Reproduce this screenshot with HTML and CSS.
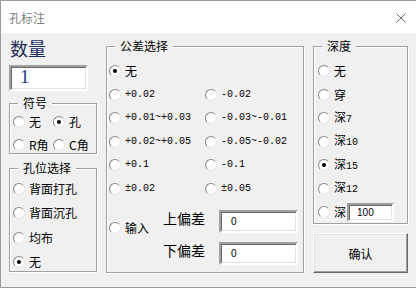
FILE: index.html
```html
<!DOCTYPE html>
<html lang="zh-CN">
<head>
<meta charset="utf-8">
<title>孔标注</title>
<link rel="stylesheet" href="styles.css">
</head>
<body>
<div class="window">
  <div class="titlebar">
    <span class="title">孔标注</span>
    <svg class="close" width="10" height="10" viewBox="0 0 10 10"><path d="M0.5 0.5L9.5 9.5M9.5 0.5L0.5 9.5" stroke="#707070" stroke-width="1" fill="none"/></svg>
  </div>
  <div class="client">
    <div class="col col-left">
      <div class="qty-label">数量</div>
      <div class="edit qty-edit">1</div>
      <div class="group g-symbol">
        <div class="gtitle">符号</div>
        <div class="sym-grid">
          <label class="radio"><span class="dot"></span><span>无</span></label>
          <label class="radio"><span class="dot on"></span><span>孔</span></label>
          <label class="radio"><span class="dot"></span><span>R角</span></label>
          <label class="radio"><span class="dot"></span><span>C角</span></label>
        </div>
      </div>
      <div class="group g-pos">
        <div class="gtitle">孔位选择</div>
        <div class="pos-stack">
          <label class="radio"><span class="dot"></span><span>背面打孔</span></label>
          <label class="radio"><span class="dot"></span><span>背面沉孔</span></label>
          <label class="radio"><span class="dot"></span><span>均布</span></label>
          <label class="radio"><span class="dot on"></span><span>无</span></label>
        </div>
      </div>
    </div>
    <div class="col col-mid">
      <div class="group g-tol">
        <div class="gtitle">公差选择</div>
        <div class="tol-grid">
          <label class="radio full"><span class="dot on"></span><span>无</span></label>
          <label class="radio"><span class="dot"></span><span class="num">+0.02</span></label>
          <label class="radio"><span class="dot"></span><span class="num">-0.02</span></label>
          <label class="radio"><span class="dot"></span><span class="num">+0.01~+0.03</span></label>
          <label class="radio"><span class="dot"></span><span class="num">-0.03~-0.01</span></label>
          <label class="radio"><span class="dot"></span><span class="num">+0.02~+0.05</span></label>
          <label class="radio"><span class="dot"></span><span class="num">-0.05~-0.02</span></label>
          <label class="radio"><span class="dot"></span><span class="num">+0.1</span></label>
          <label class="radio"><span class="dot"></span><span class="num">-0.1</span></label>
          <label class="radio"><span class="dot"></span><span class="num">±0.02</span></label>
          <label class="radio"><span class="dot"></span><span class="num">±0.05</span></label>
        </div>
        <div class="input-sec">
          <label class="radio"><span class="dot"></span><span>输入</span></label>
          <div class="dev-grid">
            <span class="dev-label">上偏差</span>
            <div class="edit dev-edit">0</div>
            <span class="dev-label">下偏差</span>
            <div class="edit dev-edit">0</div>
          </div>
        </div>
      </div>
    </div>
    <div class="col col-right">
      <div class="group g-depth">
        <div class="gtitle">深度</div>
        <div class="depth-stack">
          <label class="radio"><span class="dot"></span><span>无</span></label>
          <label class="radio"><span class="dot"></span><span>穿</span></label>
          <label class="radio"><span class="dot"></span><span>深<span class="num">7</span></span></label>
          <label class="radio"><span class="dot"></span><span>深<span class="num">10</span></span></label>
          <label class="radio"><span class="dot on"></span><span>深<span class="num">15</span></span></label>
          <label class="radio"><span class="dot"></span><span>深<span class="num">12</span></span></label>
          <label class="radio"><span class="dot"></span><span>深</span><span class="edit depth-edit">100</span></label>
        </div>
      </div>
      <div class="btn">确认</div>
    </div>
  </div>
</div>
</body>
</html>
```

FILE: styles.css
```css
* { box-sizing: border-box; }
html, body { margin: 0; padding: 0; }
body {
  width: 416px;
  height: 288px;
  overflow: hidden;
  font-family: "Noto Sans CJK SC", sans-serif;
  font-size: 12px;
  color: #000;
  background: #f0f0f0;
}
.window {
  width: 416px;
  height: 288px;
  display: flex;
  flex-direction: column;
  border-left: 1px solid #9a9a9a;
  border-top: 1px solid #9a9a9a;
  border-bottom: 1px solid #9a9a9a;
  background: #f0f0f0;
}
.titlebar {
  flex: none;
  height: 32px;
  background: #fff;
  display: flex;
  align-items: center;
  justify-content: space-between;
  padding: 2px 10px 0 8px;
}
.title { color: #808080; line-height: 16px; }
.close { display: block; }

.client {
  flex: 1;
  display: flex;
  gap: 9px;
  padding: 5px 0 0 8px;
}
.col { display: flex; flex-direction: column; }
.col-left { width: 88px; }
.col-mid { width: 198px; }
.col-right { width: 95px; }

.qty-label {
  font-size: 18px;
  line-height: 20px;
  color: #1c2a5a;
  margin-left: 1px;
}
.edit {
  background: #fff;
  border: 2px solid;
  border-color: #a0a0a0 #fff #fff #a0a0a0;
  box-shadow: inset 1px 1px 0 #696969, inset -1px -1px 0 #e3e3e3;
}
.qty-edit {
  width: 79px;
  height: 26px;
  margin-top: 7px;
  font-family: "Liberation Serif", serif;
  font-size: 19px;
  line-height: 20px;
  color: #1a3a8a;
  padding-left: 9px;
}

.group {
  border: 1px solid #a0a0a0;
  box-shadow: inset 1px 1px 0 #fff, 1px 1px 0 #fff;
  display: flex;
  flex-direction: column;
}
.gtitle {
  align-self: flex-start;
  height: 14px;
  line-height: 14px;
  margin: -8px 0 0 8px;
  padding: 0 5px;
  background: #f0f0f0;
}

.radio {
  display: flex;
  align-items: center;
  height: 16px;
  line-height: 16px;
  white-space: nowrap;
}
.dot {
  flex: none;
  width: 12px;
  height: 12px;
  border-radius: 50%;
  margin-right: 4px;
  background: #fff;
  border: 1px solid;
  border-color: #8a8a8a #e6e6e6 #e6e6e6 #8a8a8a;
  display: flex;
  align-items: center;
  justify-content: center;
}
.dot.on::after {
  content: "";
  width: 4px;
  height: 4px;
  border-radius: 50%;
  background: #000;
}
.num {
  font-family: "Liberation Mono", monospace;
  font-size: 10px;
}

.g-symbol { margin-top: 12px; }
.sym-grid {
  display: grid;
  grid-template-columns: 40px 1fr;
  row-gap: 7px;
  margin-top: 4px;
  padding-left: 3px;
}
.g-pos { margin-top: 14px; padding-bottom: 1px; }
.pos-stack {
  display: flex;
  flex-direction: column;
  gap: 8.3px;
  margin-top: 6px;
  padding-left: 3px;
}

.g-tol { margin-top: 8px; padding-bottom: 7px; }
.tol-grid {
  display: grid;
  grid-template-columns: 96px 1fr;
  row-gap: 7.5px;
  margin-top: 10px;
  padding-left: 2px;
}
.tol-grid .full { grid-column: 1 / -1; }
.input-sec {
  display: flex;
  align-items: flex-start;
  margin-top: 13.5px;
  padding-left: 2px;
}
.input-sec .radio { margin-top: 10px; }
.dev-grid {
  display: grid;
  grid-template-columns: auto 79px;
  column-gap: 14px;
  row-gap: 9px;
  margin-left: 14px;
}
.dev-label { font-size: 14px; line-height: 16px; }
.dev-edit {
  height: 23px;
  font-family: "Liberation Sans", sans-serif;
  font-size: 10px;
  line-height: 19px;
  padding-left: 10px;
}

.g-depth { margin-top: 8px; padding-bottom: 3px; }
.depth-stack {
  display: flex;
  flex-direction: column;
  gap: 7.5px;
  margin-top: 10px;
  padding-left: 4px;
}
.depth-edit {
  display: block;
  width: 47px;
  height: 19px;
  margin-left: 1px;
  font-family: "Liberation Sans", sans-serif;
  font-size: 10px;
  line-height: 15px;
  padding-left: 8px;
}
.btn {
  margin-top: 9px;
  height: 40px;
  border: 1px solid;
  border-color: #fff #696969 #696969 #fff;
  box-shadow: inset -1px -1px 0 #a0a0a0, inset 1px 1px 0 #e3e3e3;
  background: #f0f0f0;
  display: flex;
  align-items: center;
  justify-content: center;
}
```
